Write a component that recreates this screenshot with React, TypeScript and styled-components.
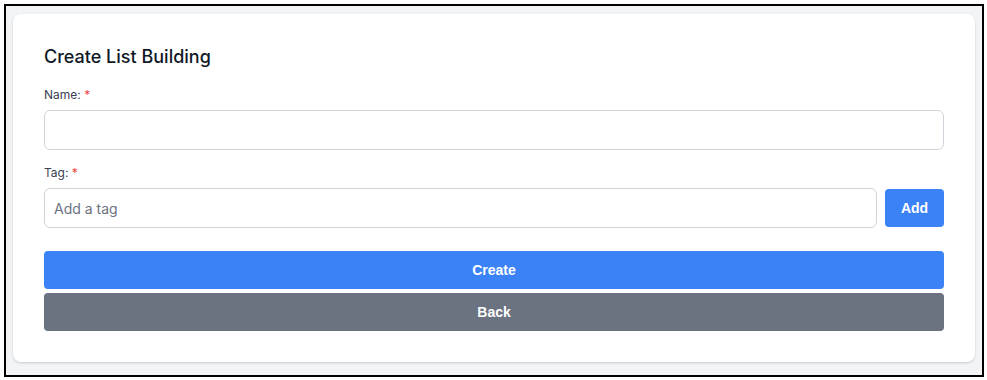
import { createGlobalStyle } from "styled-components";
import styled from "styled-components";

const GlobalStyle = createGlobalStyle`
  html, body {
    margin: 0;
    padding: 0;
    background: #ffffff;
  }
  * {
    box-sizing: border-box;
  }
`;

const App = () => {
  return (
    <>
      <GlobalStyle />
      <Frame>
        <Card>
          <Title>Create List Building</Title>
          <Field>
            <Label>
              Name: <Required>*</Required>
            </Label>
            <TextInput type="text" />
          </Field>
          <Field>
            <Label>
              Tag: <Required>*</Required>
            </Label>
            <TagRow>
              <TextInput type="text" placeholder="Add a tag" $grow />
              <AddButton type="button">Add</AddButton>
            </TagRow>
          </Field>
          <Actions>
            <ActionButton type="button" $variant="primary">
              Create
            </ActionButton>
            <ActionButton type="button" $variant="secondary">
              Back
            </ActionButton>
          </Actions>
        </Card>
      </Frame>
    </>
  );
};

const Frame = styled.div`
  margin: 4px 3px 0 4px;
  height: 373px;
  border: 2px solid #000000;
  background: #f3f4f6;
  padding: 8px 7px;
  font-family: Inter, "Liberation Sans", sans-serif;
`;

const Card = styled.div`
  background: #ffffff;
  border-radius: 8px;
  box-shadow: 0 1px 3px rgba(0, 0, 0, 0.12), 0 1px 2px rgba(0, 0, 0, 0.06);
  padding: 29px 31px 31px 31px;
  height: 348px;
`;

const Title = styled.h2`
  margin: 0 0 16px 0;
  font-size: 18px;
  line-height: 28px;
  font-weight: 500;
  color: #111827;
`;

const Field = styled.div`
  display: flex;
  flex-direction: column;
  gap: 7px;
  margin-bottom: 15px;
`;

const Label = styled.label`
  font-size: 12px;
  line-height: 16px;
  font-weight: 400;
  color: #374151;
`;

const Required = styled.span`
  color: #ef4444;
`;

const TextInput = styled.input<{ $grow?: boolean }>`
  flex: ${(p) => (p.$grow ? "1 1 auto" : "none")};
  width: 100%;
  height: 40px;
  border: 1px solid #d1d5db;
  border-radius: 6px;
  padding: 0 9px;
  font-family: Inter, "Liberation Sans", sans-serif;
  font-size: 14px;
  color: #111827;
  background: #ffffff;
  outline: none;

  &::placeholder {
    color: #6b7280;
  }
`;

const TagRow = styled.div`
  display: flex;
  align-items: center;
  gap: 8px;
`;

const AddButton = styled.button`
  flex: none;
  width: 59px;
  height: 38px;
  border: none;
  border-radius: 4px;
  background: #3b82f6;
  color: #ffffff;
  font-family: "Liberation Sans", Arial, sans-serif;
  font-size: 14px;
  font-weight: 700;
`;

const Actions = styled.div`
  display: flex;
  flex-direction: column;
  gap: 4px;
  margin-top: 23px;
`;

const ActionButton = styled.button<{ $variant: "primary" | "secondary" }>`
  width: 100%;
  height: 38px;
  border: none;
  border-radius: 4px;
  background: ${(p) => (p.$variant === "primary" ? "#3b82f6" : "#6b7280")};
  color: #ffffff;
  font-family: "Liberation Sans", Arial, sans-serif;
  font-size: 14px;
  font-weight: 700;
`;

export default App;
